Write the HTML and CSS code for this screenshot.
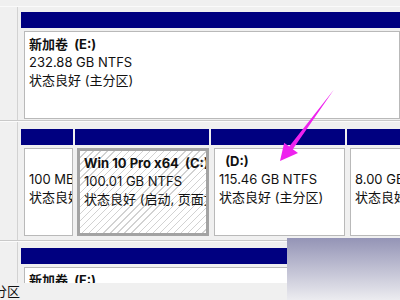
FILE: index.html
```html
<!DOCTYPE html>
<html lang="zh-CN">
<head>
    <meta charset="UTF-8">
    <title>磁盘管理</title>
    <link rel="stylesheet" href="styles.css">
</head>
<body>
    <div class="screen">
        <!-- Disk strips -->
        <div class="volumes">
            <div class="top-gap"></div>

            <div class="disk disk-first">
                <div class="disk-info"></div>
                <div class="parts">
                    <div class="part part-grow">
                        <div class="part-head"></div>
                        <div class="part-body">
                            <div class="part-title">新加卷&nbsp;&nbsp;(E:)</div>
                            <div>232.88 GB NTFS</div>
                            <div>状态良好 (主分区)</div>
                        </div>
                    </div>
                </div>
            </div>

            <div class="disk">
                <div class="disk-info"></div>
                <div class="parts">
                    <div class="part part-efi">
                        <div class="part-head"></div>
                        <div class="part-body">
                            <div class="part-title">&nbsp;</div>
                            <div>100 MB NTFS</div>
                            <div>状态良好 (EFI 系统分区)</div>
                        </div>
                    </div>
                    <div class="part part-wide selected">
                        <div class="part-head"></div>
                        <div class="part-body">
                            <div class="part-title">Win 10 Pro x64&nbsp;&nbsp;(C:)</div>
                            <div>100.01 GB NTFS</div>
                            <div>状态良好 (启动, 页面文件, 故障转储, 主分区)</div>
                        </div>
                    </div>
                    <div class="part part-wide">
                        <div class="part-head"></div>
                        <div class="part-body">
                            <div class="part-title">&nbsp;&nbsp;(D:)</div>
                            <div>115.46 GB NTFS</div>
                            <div>状态良好 (主分区)</div>
                        </div>
                    </div>
                    <div class="part part-grow">
                        <div class="part-head"></div>
                        <div class="part-body">
                            <div class="part-title">&nbsp;</div>
                            <div>8.00 GB</div>
                            <div>状态良好 (恢复分区)</div>
                        </div>
                    </div>
                </div>
            </div>

            <div class="disk disk-last">
                <div class="disk-info"></div>
                <div class="parts">
                    <div class="part part-grow">
                        <div class="part-head"></div>
                        <div class="part-body">
                            <div class="part-title">新加卷&nbsp;&nbsp;(F:)</div>
                            <div>465.76 GB NTFS</div>
                            <div>状态良好 (主分区)</div>
                        </div>
                    </div>
                </div>
            </div>
        </div>

        <!-- Legend bar -->
        <div class="legend"><span>主分区</span></div>

        <!-- Overlays -->
        <div class="fade"></div>
        <svg class="arrow" width="400" height="300" viewBox="0 0 400 300">
            <polygon points="334,89.5 292.8,149.2 298,153 280,161 284.2,142.8 289.2,146.6" fill="#ee22ee"/>
        </svg>
    </div>
</body>
</html>
```

FILE: styles.css
```css
body {
    margin: 0;
    background-color: #f0f0f0;
    font-family: Inter, "Noto Sans CJK SC", sans-serif;
    font-size: 13px;
    color: #111;
}
.screen {
    position: relative;
    width: 400px;
    height: 300px;
    overflow: hidden;
}
.volumes {
    height: 283px;
    overflow: hidden;
}
.top-gap {
    height: 6px;
    border-bottom: 1px solid #fafafa;
}
.disk {
    display: flex;
    height: 118px;
    border-bottom: 1px solid #c9c9c9;
    border-top: 1px solid #fbfbfb;
}
.disk-first {
    height: 113px;
    border-top: none;
}
.disk-last {
    border-bottom: none;
}
.disk-info {
    width: 17px;
    flex-shrink: 0;
    border-right: 1px solid #d2d2d2;
}
.parts {
    flex: 1;
    display: flex;
    gap: 2px;
    padding: 7px 0 0 3px;
    overflow: hidden;
}
.disk-first .parts {
    padding-top: 5px;
}
.disk-last .parts {
    padding-top: 6px;
}
.part {
    flex-shrink: 0;
    display: flex;
    flex-direction: column;
}
.part-grow {
    flex: 1 0 120px;
}
.part-efi {
    width: 52px;
}
.part-wide {
    width: 134px;
}
.part-head {
    height: 16px;
    background-color: #000080;
}
.part-body {
    height: 83px;
    margin: 3px 0 0 3px;
    padding: 3px 0 0 4px;
    border: 1px solid #b9b9b9;
    background-color: #fff;
    line-height: 18px;
    white-space: nowrap;
    overflow: hidden;
}
.part-title {
    font-weight: 700;
}
.selected .part-body {
    height: 79px;
    margin-left: 2px;
    border: 3px solid #a3a3a3;
    background-color: #fff;
    background-image: repeating-linear-gradient(135deg, #fff 0, #fff 4px, #d2d2d2 4px, #d2d2d2 5px);
}
.legend {
    height: 17px;
    line-height: 17px;
    white-space: nowrap;
    overflow: hidden;
}
.legend span {
    margin-left: -19px;
}
.fade {
    position: absolute;
    left: 287px;
    top: 238px;
    width: 113px;
    height: 62px;
    background: linear-gradient(#9494b6, #ececf0);
}
.arrow {
    position: absolute;
    left: 0;
    top: 0;
    pointer-events: none;
}
```
